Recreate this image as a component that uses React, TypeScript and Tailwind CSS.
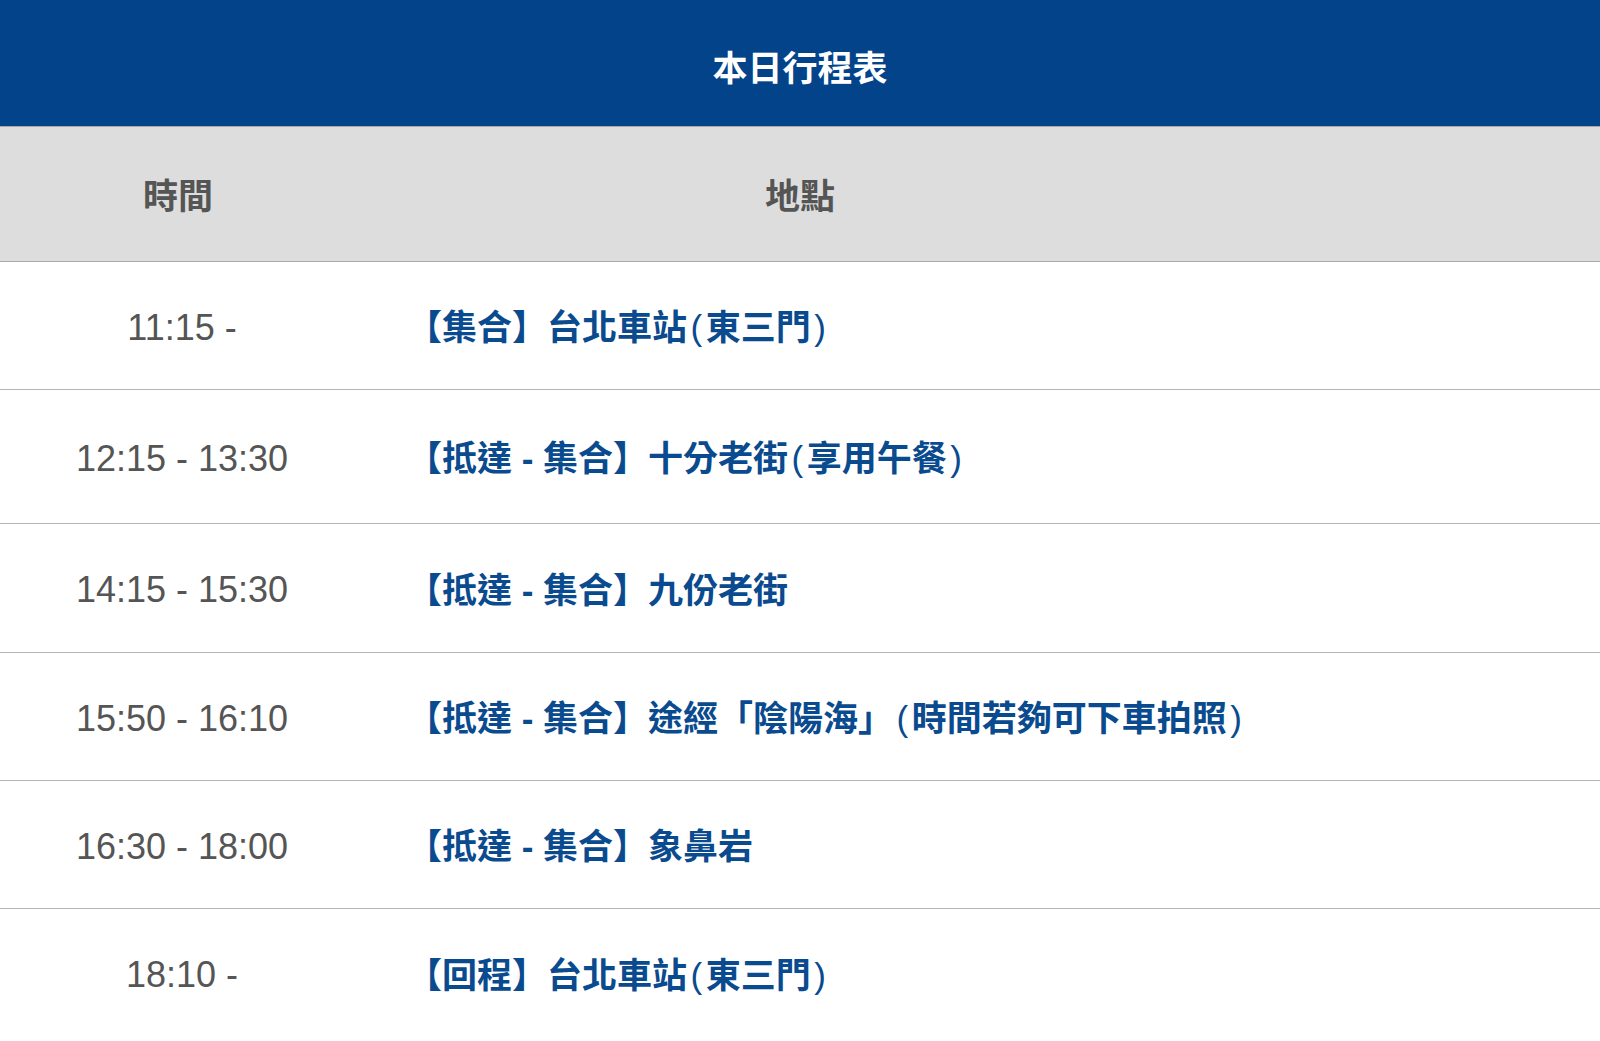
import React from 'react';

interface Stop {
  time: string;
  place: string;
  h: string;
}

const stops: Stop[] = [
  { time: '11:15 -', place: '【集合】台北車站(東三門)', h: 'h-[128px]' },
  { time: '12:15 - 13:30', place: '【抵達 - 集合】十分老街(享用午餐)', h: 'h-[134px]' },
  { time: '14:15 - 15:30', place: '【抵達 - 集合】九份老街', h: 'h-[129px]' },
  { time: '15:50 - 16:10', place: '【抵達 - 集合】途經「陰陽海」(時間若夠可下車拍照)', h: 'h-[128px]' },
  { time: '16:30 - 18:00', place: '【抵達 - 集合】象鼻岩', h: 'h-[128px]' },
  { time: '18:10 -', place: '【回程】台北車站(東三門)', h: 'h-[128px]' },
];

const font = "font-['Liberation_Sans','Noto_Sans_CJK_TC',sans-serif]";

// parens in the source render thinner and a touch wider than the CJK glyphs around them
const Place: React.FC<{ text: string }> = ({ text }) => {
  const parts = text.split(/([()])/);
  return (
    <>
      {parts.map((p, i) =>
        p === '(' || p === ')' ? (
          <span key={i} className="font-normal mx-[3.5px]">{p}</span>
        ) : (
          <span key={i}>{p}</span>
        )
      )}
    </>
  );
};

const App: React.FC = () => {
  return (
    <div className={`w-full min-h-[1041px] bg-white ${font}`}>
      <div className="h-[126px] pt-[10px] bg-[#03438a] flex items-center justify-center">
        <h1 className="text-[35px] font-bold text-white leading-none">本日行程表</h1>
      </div>

      <div className="h-[136px] pt-[4px] bg-[#dddddd] border-t border-b border-[#a9a9a9] grid grid-cols-[364px_1fr_364px] items-center">
        <div className="text-center pr-[8px] text-[35px] font-bold text-[#555555] leading-none">時間</div>
        <div className="text-center text-[35px] font-bold text-[#555555] leading-none">地點</div>
        <div />
      </div>

      {stops.map((s, i) => (
        <div
          key={i}
          className={`${s.h} pt-[4px] grid grid-cols-[364px_1fr] items-center ${i < stops.length - 1 ? 'border-b border-[#b5b5b5]' : ''}`}
        >
          <div className="text-center text-[36px] text-[#555555] leading-none">{s.time}</div>
          <div className="pl-[43px] text-[35px] font-bold text-[#0a4a8e] leading-none whitespace-nowrap">
            <Place text={s.place} />
          </div>
        </div>
      ))}
    </div>
  );
};

export default App;
